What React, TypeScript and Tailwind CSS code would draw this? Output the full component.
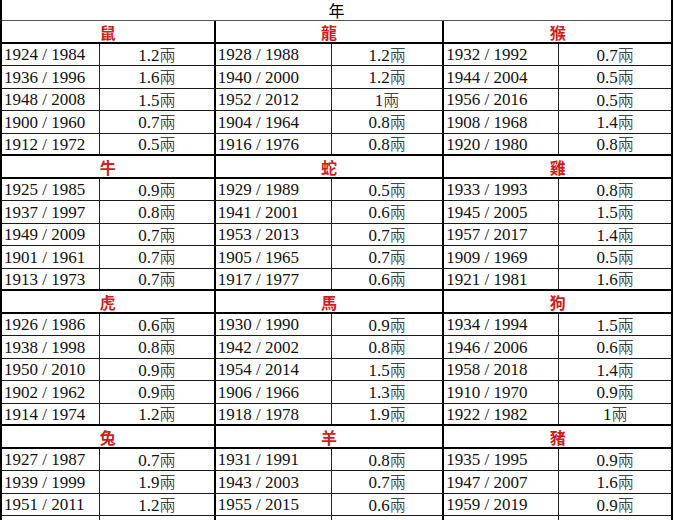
import React from "react";

// ─── Datos ────────────────────────────────────────────────────────────────────

type Grupo = { animal: string; filas: [string, string][] };

const BLOQUES: Grupo[][] = [
  [
    { animal: "鼠", filas: [["1924 / 1984", "1.2"], ["1936 / 1996", "1.6"], ["1948 / 2008", "1.5"], ["1900 / 1960", "0.7"], ["1912 / 1972", "0.5"]] },
    { animal: "龍", filas: [["1928 / 1988", "1.2"], ["1940 / 2000", "1.2"], ["1952 / 2012", "1"], ["1904 / 1964", "0.8"], ["1916 / 1976", "0.8"]] },
    { animal: "猴", filas: [["1932 / 1992", "0.7"], ["1944 / 2004", "0.5"], ["1956 / 2016", "0.5"], ["1908 / 1968", "1.4"], ["1920 / 1980", "0.8"]] },
  ],
  [
    { animal: "牛", filas: [["1925 / 1985", "0.9"], ["1937 / 1997", "0.8"], ["1949 / 2009", "0.7"], ["1901 / 1961", "0.7"], ["1913 / 1973", "0.7"]] },
    { animal: "蛇", filas: [["1929 / 1989", "0.5"], ["1941 / 2001", "0.6"], ["1953 / 2013", "0.7"], ["1905 / 1965", "0.7"], ["1917 / 1977", "0.6"]] },
    { animal: "雞", filas: [["1933 / 1993", "0.8"], ["1945 / 2005", "1.5"], ["1957 / 2017", "1.4"], ["1909 / 1969", "0.5"], ["1921 / 1981", "1.6"]] },
  ],
  [
    { animal: "虎", filas: [["1926 / 1986", "0.6"], ["1938 / 1998", "0.8"], ["1950 / 2010", "0.9"], ["1902 / 1962", "0.9"], ["1914 / 1974", "1.2"]] },
    { animal: "馬", filas: [["1930 / 1990", "0.9"], ["1942 / 2002", "0.8"], ["1954 / 2014", "1.5"], ["1906 / 1966", "1.3"], ["1918 / 1978", "1.9"]] },
    { animal: "狗", filas: [["1934 / 1994", "1.5"], ["1946 / 2006", "0.6"], ["1958 / 2018", "1.4"], ["1910 / 1970", "0.9"], ["1922 / 1982", "1"]] },
  ],
  [
    { animal: "兔", filas: [["1927 / 1987", "0.7"], ["1939 / 1999", "1.9"], ["1951 / 2011", "1.2"], ["1903 / 1963", "1.0"], ["1915 / 1975", "0.6"]] },
    { animal: "羊", filas: [["1931 / 1991", "0.8"], ["1943 / 2003", "0.7"], ["1955 / 2015", "0.6"], ["1907 / 1967", "0.5"], ["1919 / 1979", "0.6"]] },
    { animal: "豬", filas: [["1935 / 1995", "0.9"], ["1947 / 2007", "1.6"], ["1959 / 2019", "0.9"], ["1911 / 1971", "1.7"], ["1923 / 1983", "1.6"]] },
  ],
];

// anchos: [año] por grupo; el valor ocupa el resto
const ANCHO_ANO = ["w-[98px]", "w-[116px]", "w-[115px]"];
const GRUPO_W = ["w-[213px]", "w-[230px]", "w-[230px]"];
const ALTURAS = ["h-[22px]", "h-[23px]", "h-[22px]", "h-[23px]", "h-[22px]"];

const SERIF = { fontFamily: '"Liberation Serif", serif' };
const CJK = { fontFamily: '"Noto Sans CJK TC", sans-serif' };

// ─── Componentes ──────────────────────────────────────────────────────────────

function Bloque({ grupos }: { grupos: Grupo[] }) {
  return (
    <div>
      {/* fila de animales */}
      <div className="flex h-[23px] border-b-2 border-black">
        {grupos.map((g, i) => (
          <div
            key={g.animal}
            className={[
              "flex items-center justify-center text-[#d01c1c] text-[16px] font-semibold",
              GRUPO_W[i],
              i > 0 ? "border-l-2 border-black" : "",
            ].join(" ")}
            style={CJK}
          >
            {g.animal}
          </div>
        ))}
      </div>

      {/* filas de datos */}
      {[0, 1, 2, 3, 4].map((r) => (
        <div
          key={r}
          className={[
            "flex",
            ALTURAS[r],
            r === 4 ? "border-b-2 border-black" : "border-b-[1.5px] border-[#1a1a1a]",
          ].join(" ")}
        >
          {grupos.map((g, i) => (
            <div
              key={g.animal}
              className={["flex", GRUPO_W[i], i > 0 ? "border-l-2 border-black" : ""].join(" ")}
            >
              <div
                className={[
                  "flex items-center pl-[2px] border-r border-[#222] text-[17px] text-[#111] leading-none",
                  ANCHO_ANO[i],
                ].join(" ")}
                style={SERIF}
              >
                {g.filas[r][0]}
              </div>
              <div className="flex-1 flex items-center justify-center text-[17px] text-[#111]">
                <span className="leading-[20px] whitespace-nowrap" style={SERIF}>
                  {g.filas[r][1]}
                  <span className="text-[16px] font-light" style={CJK}>
                    兩
                  </span>
                </span>
              </div>
            </div>
          ))}
        </div>
      ))}
    </div>
  );
}

export default function App() {
  return (
    <div className="w-[676px] h-[520px] overflow-hidden bg-white">
      <div className="w-[673px] border-x-2 border-black">
        <div
          className="h-[21px] flex items-center justify-center border-b border-[#555] text-[16px] leading-none text-black"
          style={CJK}
        >
          年
        </div>
        {BLOQUES.map((b, i) => (
          <Bloque key={i} grupos={b} />
        ))}
      </div>
    </div>
  );
}
